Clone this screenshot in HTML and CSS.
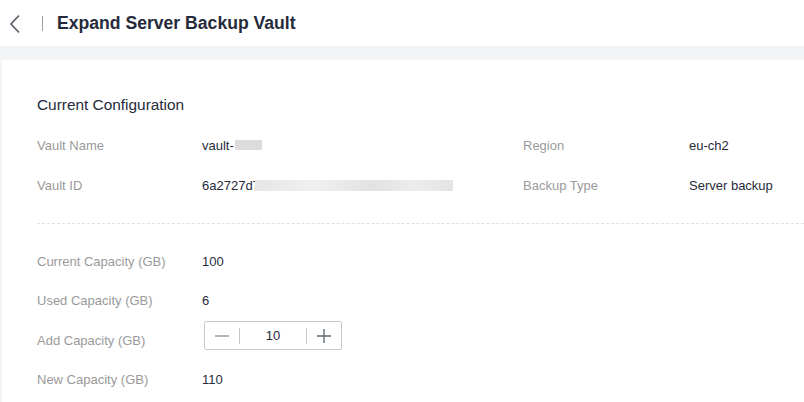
FILE: index.html
```html
<!DOCTYPE html>
<html>
<head>
<meta charset="utf-8">
<link rel="stylesheet" href="styles.css">
</head>
<body>
<header class="topbar">
  <svg class="back" width="14" height="20" viewBox="0 0 14 20"><path d="M11 1.5 L3 10 L11 18.5" fill="none" stroke="#5f6671" stroke-width="1.8"/></svg>
  <span class="sep"></span>
  <h1 class="title">Expand Server Backup Vault</h1>
</header>
<div class="band"></div>
<main class="page">
  <section class="card">
    <h2 class="section-title">Current Configuration</h2>
    <div class="grid">
      <div class="row">
        <span class="label">Vault Name</span>
        <span class="value">vault-<span class="blur short"></span></span>
      </div>
      <div class="row">
        <span class="label">Region</span>
        <span class="value">eu-ch2</span>
      </div>
      <div class="row">
        <span class="label">Vault ID</span>
        <span class="value">6a2727d7<span class="blur long"></span></span>
      </div>
      <div class="row">
        <span class="label">Backup Type</span>
        <span class="value">Server backup</span>
      </div>
    </div>
    <div class="divider"></div>
    <div class="cap">
      <div class="crow"><span class="label">Current Capacity (GB)</span><span class="value">100</span></div>
      <div class="crow"><span class="label">Used Capacity (GB)</span><span class="value">6</span></div>
      <div class="crow add"><span class="label">Add Capacity (GB)</span>
        <div class="stepper">
          <span class="btn"><svg width="14" height="14" viewBox="0 0 14 14"><path d="M0 7 H14" stroke="#8a8e99" stroke-width="1.3"/></svg></span>
          <span class="num">10</span>
          <span class="btn"><svg width="14" height="14" viewBox="0 0 14 14"><path d="M0 7 H14 M7 0 V14" stroke="#5f6671" stroke-width="1.3"/></svg></span>
        </div>
      </div>
      <div class="crow"><span class="label">New Capacity (GB)</span><span class="value">110</span></div>
    </div>
  </section>
</main>
</body>
</html>
```
FILE: styles.css
```css
* { box-sizing: border-box; margin: 0; padding: 0; }
html, body { width: 804px; height: 402px; overflow: hidden; }
body { font-family: "Liberation Sans", Arial, sans-serif; background: #fff; color: #252b3a; }
.topbar { height: 46px; display: flex; align-items: center; padding-left: 8px; }
.back { display: block; margin-top: 1px; }
.sep { width: 1px; height: 15px; background: #9a9ea6; margin-left: 20px; margin-right: 14px; }
.title { font-size: 17.6px; font-weight: bold; color: #252b3a; letter-spacing: 0; }
.band { height: 14px; background: #f3f4f6; }
.page { background: #f3f4f6; padding-left: 2px; height: 342px; }
.card { background: #fff; height: 100%; padding: 37px 0 0 35px; }
.section-title { font-size: 15.4px; font-weight: normal; color: #252b3a; line-height: 16px; }
.grid { display: grid; grid-template-columns: 486px 1fr; margin-top: 24px; row-gap: 24px; }
.row { display: flex; align-items: center; height: 16px; }
.label { font-size: 13px; color: #9a9a9a; width: 165px; flex: none; }
.row:nth-child(2n) .label { width: 166px; }
.value { font-size: 13px; color: #252b3a; display: inline-flex; align-items: center; }
.blur { display: inline-block; height: 11px; }
.blur.short { width: 27px; height: 10px; background: #dcdcdc; margin-left: 1px; }
.blur.long { width: 198px; margin-left: -5px; background: linear-gradient(90deg, #e6e6e6, #f0f0f0 30%, #e2e2e2 60%, #ececec 80%, #e4e4e4); }
.divider { margin-top: 30px; border-top: 1px dashed #dfe1e6; }
.cap { display: flex; flex-direction: column; margin-top: 29px; }
.crow { display: flex; align-items: center; height: 16px; margin-bottom: 23px; }
.crow.add { height: 16px; margin-top: 1px; margin-bottom: 23px; }
.stepper { display: flex; align-items: center; width: 138px; height: 29px; border: 1px solid #c7c9cf; border-radius: 2px; margin-left: 2px; margin-top: -9px; }
.btn { width: 35px; display: flex; justify-content: center; align-items: center; height: 16px; }
.btn:first-child { border-right: 1px solid #c7c9cf; }
.btn:last-child { border-left: 1px solid #c7c9cf; }
.num { flex: 1; text-align: center; font-size: 13px; color: #252b3a; }
```
